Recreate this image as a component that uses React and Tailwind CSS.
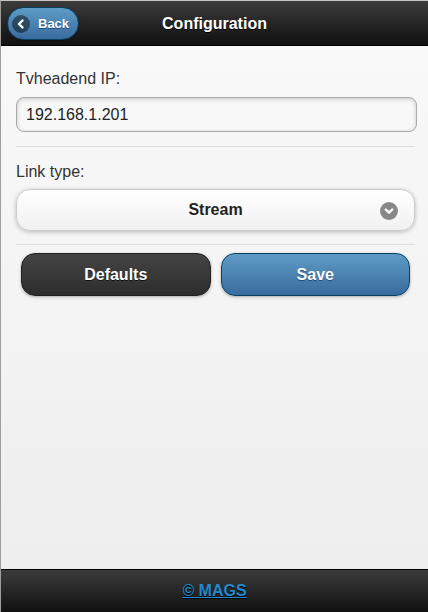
export default function App() {
  return (
    <div className="h-[612px] w-[428px] flex flex-col border-l border-[#a09c98] border-t border-t-[#c8c6c2] font-['Liberation_Sans',Arial,sans-serif] overflow-hidden">
      {/* Header */}
      <div className="relative h-[45px] shrink-0 flex items-center justify-center bg-gradient-to-b from-[#3c3c3c] to-[#111111] border-b border-[#000]">
        <button className="absolute left-[6px] top-[6px] h-[33px] w-[72px] rounded-full border border-[#044062] bg-gradient-to-b from-[#5f9cc5] to-[#396b9e] flex items-center pl-[4px] shadow-[0_1px_3px_rgba(0,0,0,0.3)]">
          <span className="w-[18px] h-[18px] rounded-full bg-[rgba(0,0,0,0.45)] flex items-center justify-center">
            <svg width="10" height="10" viewBox="0 0 10 10">
              <path d="M6.5 1.5 L3 5 L6.5 8.5" stroke="white" strokeWidth="2.4" fill="none" strokeLinecap="round" strokeLinejoin="round" />
            </svg>
          </span>
          <span className="ml-[8px] text-white text-[13px] font-bold [text-shadow:0_1px_0_#194b7e]">Back</span>
        </button>
        <h1 className="text-white text-[16px] font-bold [text-shadow:0_1px_0_#000] mt-[2px]">Configuration</h1>
      </div>

      {/* Content */}
      <div className="flex-1 bg-gradient-to-b from-[#f9f9f9] to-[#eeeeee] pl-[15px] pr-[13px] pt-[22px]">
        <label className="block text-[16px] text-[#333] leading-[20px] pt-[1px]">Tvheadend IP:</label>
        <div className="mt-[8px] -mr-[2px] h-[35px] rounded-[8px] border border-[#aaa] bg-[#f8f8f8] shadow-[inset_0_1px_4px_rgba(0,0,0,0.2)] flex items-center px-[9px] text-[16px] text-[#222]">
          192.168.1.201
        </div>
        <div className="mt-[14px] border-t border-[#ddd]" />

        <label className="block mt-[15px] text-[16px] text-[#333] leading-[20px]">Link type:</label>
        <div className="mt-[7px] h-[42px] rounded-[14px] border border-[#ccc] bg-gradient-to-b from-[#ffffff] to-[#f1f1f1] shadow-[0_1px_4px_rgba(0,0,0,0.25)] relative flex items-center justify-center">
          <span className="text-[16px] font-bold text-[#222] [text-shadow:0_1px_0_#fff]">Stream</span>
          <span className="absolute right-[16px] top-[12px] w-[18px] h-[18px] rounded-full bg-[#888] flex items-center justify-center">
            <svg width="10" height="10" viewBox="0 0 10 10">
              <path d="M1.8 3.5 L5 6.6 L8.2 3.5" stroke="white" strokeWidth="2.4" fill="none" strokeLinecap="round" strokeLinejoin="round" />
            </svg>
          </span>
        </div>
        <div className="mt-[13px] border-t border-[#ddd]" />

        <div className="mt-[8px] flex gap-[10px] px-[5px]">
          <button className="flex-1 h-[43px] rounded-[14px] border border-[#1f1f1f] bg-gradient-to-b from-[#444444] to-[#2d2d2d] text-white text-[16px] font-bold [text-shadow:0_1px_0_#111] shadow-[0_1px_3px_rgba(0,0,0,0.3)]">
            Defaults
          </button>
          <button className="flex-1 h-[43px] rounded-[14px] border border-[#044062] bg-gradient-to-b from-[#5f9cc5] to-[#396b9e] text-white text-[16px] font-bold [text-shadow:0_1px_0_#194b7e] shadow-[0_1px_3px_rgba(0,0,0,0.3)]">
            Save
          </button>
        </div>
      </div>

      {/* Footer */}
      <div className="h-[43px] shrink-0 flex items-center justify-center bg-gradient-to-b from-[#3c3c3c] to-[#111111] border-t border-[#000]">
        <a className="text-[#2489ce] text-[16px] font-bold underline [text-shadow:0_1px_0_#000]">© MAGS</a>
      </div>
    </div>
  );
}
